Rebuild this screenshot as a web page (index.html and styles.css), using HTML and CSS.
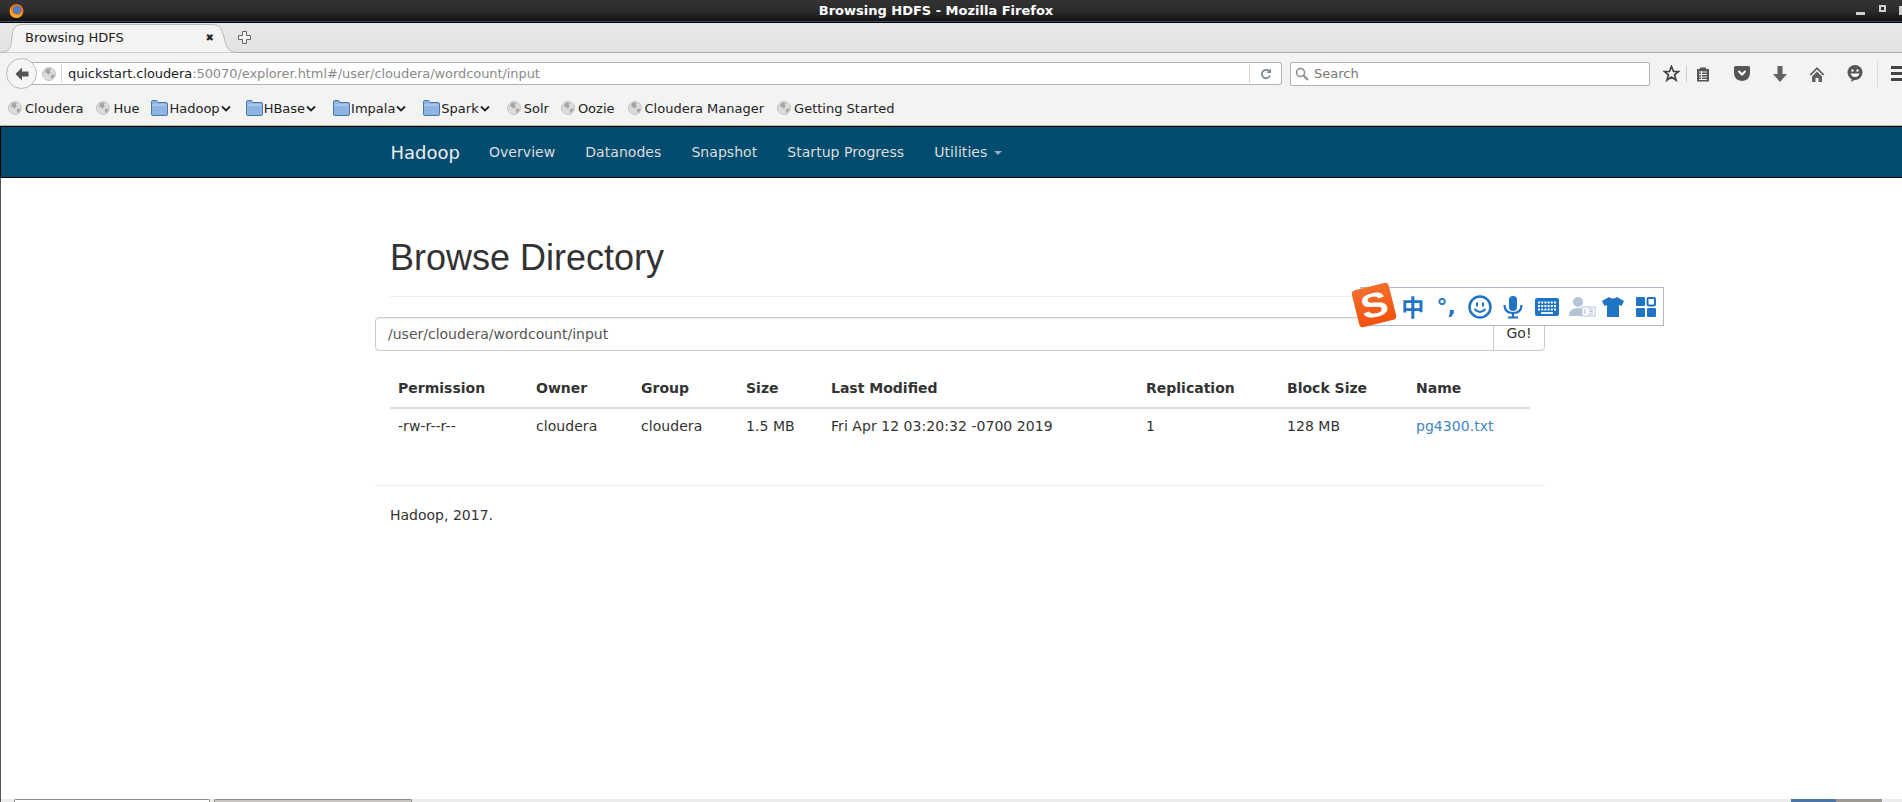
FILE: index.html
```html
<!DOCTYPE html>
<html lang="en">
<head>
    <meta charset="UTF-8">
    <title>Browsing HDFS - Mozilla Firefox</title>
    <link rel="stylesheet" href="styles.css">
</head>
<body>
<svg class="defs" width="0" height="0">
    <defs>
        <symbol id="globe" viewBox="0 0 14 14">
            <circle cx="7" cy="7" r="6.5" fill="#dcdcdc" stroke="#c4c4c4"/>
            <path d="M4 2.2c2-1 4-.6 5 .3L7.6 4 8.8 5.6 6.6 7.8 4.8 6 3 5.6zM9 8l2.800-.6.800 1.600L10 12l-1.200-1.500z" fill="#a6a6a6"/>
        </symbol>
        <symbol id="folder" viewBox="0 0 17 16">
            <path d="M.5 14V2q0-1.500 1.500-1.500h3.500L7 2.500h8q1.500 0 1.500 1.500v10q0 1.500-1.500 1.500H2Q.5 15.500.5 14z" fill="#8db4e2" stroke="#4a76a8"/>
            <path d="M1.500 5h14" stroke="#c4d9f2"/>
        </symbol>
        <symbol id="chev" viewBox="0 0 10 7">
            <path d="M1 1.500l4 4 4-4" fill="none" stroke="#222" stroke-width="1.800"/>
        </symbol>
    </defs>
</svg>

<div class="window">
    <div class="titlebar">
        <svg class="fx-logo" width="15" height="16" viewBox="0 0 15 16">
            <circle cx="7.500" cy="8" r="7" fill="#ee6f1c"/>
            <circle cx="8" cy="7" r="4" fill="#4a7fc4"/>
            <path d="M2 5q1 7 6 7 4 0 5-4 1 6-5.500 7Q1 15 .8 8 1 5 3 2.500z" fill="#f7a823"/>
        </svg>
        <div class="win-title">Browsing HDFS - Mozilla Firefox</div>
        <div class="win-btns">
            <span class="win-min"></span>
            <span class="win-max"></span>
            <span class="win-close"></span>
        </div>
    </div>

    <div class="tabstrip">
        <div class="tab">
            <svg class="tab-shape" width="238" height="30" viewBox="0 0 238 30">
                <path d="M0 29.500C10 29.500 11 24 12 14 13 6 14 1.500 22 1.500H212C220 1.500 222 6 224 14 226 24 228 29.500 238 29.500" fill="#f3f3f2" stroke="#b9b9b7"/>
            </svg>
            <span class="tab-label">Browsing HDFS</span>
            <span class="tab-x">&#10006;</span>
        </div>
        <svg class="newtab" width="13" height="13" viewBox="0 0 13 13">
            <path d="M4.500.5h4v4h4v4h-4v4h-4v-4h-4v-4h4z" fill="#f4f4f4" stroke="#666"/>
        </svg>
    </div>

    <div class="toolbar">
        <div class="nav-row">
            <div class="back-btn">
                <svg width="16" height="16" viewBox="0 0 16 16">
                    <path d="M8 1.500L1.500 8 8 14.500v-4h6.500v-5H8z" fill="#555"/>
                </svg>
            </div>
            <div class="urlbar">
                <svg class="url-globe" width="14" height="14"><use href="#globe"/></svg>
                <span class="url-text">quickstart.cloudera<span class="url-rest">:50070/explorer.html#/user/cloudera/wordcount/input</span></span>
                <span class="reload">
                    <svg width="12" height="12" viewBox="0 0 12 12">
                        <path d="M10 7.500A4.200 4.200 0 1 1 9 3" fill="none" stroke="#7a8a99" stroke-width="1.800"/>
                        <path d="M11 .5v4.500H6.500z" fill="#7a8a99"/>
                    </svg>
                </span>
            </div>
            <div class="searchbar">
                <svg width="14" height="14" viewBox="0 0 14 14">
                    <circle cx="5.500" cy="5.500" r="4" fill="none" stroke="#888" stroke-width="1.500"/>
                    <path d="M8.500 8.500l4.500 4.500" stroke="#888" stroke-width="2"/>
                </svg>
                <span>Search</span>
            </div>
            <div class="tool-icons">
                <svg class="ti-star" width="17" height="17" viewBox="0 0 17 17">
                    <path d="M8.500 1.500l2 5h5.200l-4.200 3.300 1.600 5.400-4.600-3.100-4.600 3.100 1.600-5.400L1.300 6.500h5.200z" fill="none" stroke="#444" stroke-width="1.700"/>
                </svg>
                <span class="ti-div"></span>
                <svg class="ti-clip" width="14" height="16" viewBox="0 0 14 16">
                    <path d="M1 3h3V1.500h6V3h3v12.500H1z" fill="#555"/>
                    <path d="M3 6h8M3 8.500h8M3 11h8M3 13.500h8M5.500 5v9" stroke="#f3f3f2"/>
                </svg>
                <svg class="ti-pocket" width="16" height="15" viewBox="0 0 16 15">
                    <path d="M0 1.500Q0 0 1.500 0h13Q16 0 16 1.500V7q0 7-8 8-8-1-8-8z" fill="#555"/>
                    <path d="M4.500 5l3.500 3.500L11.500 5" fill="none" stroke="#fff" stroke-width="2"/>
                </svg>
                <svg class="ti-down" width="14" height="16" viewBox="0 0 14 16">
                    <path d="M4.500 0h5v8H14l-7 8-7-8h4.500z" fill="#616161"/>
                </svg>
                <svg class="ti-home" width="16" height="16" viewBox="0 0 16 16">
                    <path d="M8 1L.5 8.500 2 9.500l6-6 6 6 1.500-1z" fill="#616161"/>
                    <path d="M3 10.500l5-5 5 5V16H9.500v-4h-3v4H3z" fill="#616161"/>
                </svg>
                <svg class="ti-smile" width="16" height="17" viewBox="0 0 16 17">
                    <circle cx="8" cy="7.500" r="7.500" fill="#555"/>
                    <path d="M5 13l-1 4 5-3z" fill="#555"/>
                    <circle cx="5.500" cy="5.500" r="1.200" fill="#fff"/>
                    <circle cx="10.500" cy="5.500" r="1.200" fill="#fff"/>
                    <path d="M3.500 8.500h9q-1 3.500-4.500 3.500T3.500 8.500z" fill="#fff"/>
                </svg>
                <span class="ti-sep"></span>
                <span class="ti-menu"><i></i><i></i><i></i></span>
            </div>
        </div>
        <div class="bookmarks">
            <span class="bm"><svg width="14" height="14"><use href="#globe"/></svg>Cloudera</span>
            <span class="bm"><svg width="14" height="14"><use href="#globe"/></svg>Hue</span>
            <span class="bm bm-folder bm-first"><svg width="17" height="16"><use href="#folder"/></svg>Hadoop<svg width="10" height="7"><use href="#chev"/></svg></span>
            <span class="bm bm-folder"><svg width="17" height="16"><use href="#folder"/></svg>HBase<svg width="10" height="7"><use href="#chev"/></svg></span>
            <span class="bm bm-folder"><svg width="17" height="16"><use href="#folder"/></svg>Impala<svg width="10" height="7"><use href="#chev"/></svg></span>
            <span class="bm bm-folder"><svg width="17" height="16"><use href="#folder"/></svg>Spark<svg width="10" height="7"><use href="#chev"/></svg></span>
            <span class="bm bm-solr"><svg width="14" height="14"><use href="#globe"/></svg>Solr</span>
            <span class="bm"><svg width="14" height="14"><use href="#globe"/></svg>Oozie</span>
            <span class="bm"><svg width="14" height="14"><use href="#globe"/></svg>Cloudera Manager</span>
            <span class="bm"><svg width="14" height="14"><use href="#globe"/></svg>Getting Started</span>
        </div>
    </div>

    <div class="page">
        <nav class="navbar">
            <div class="nav-inner">
                <a class="brand" href="#">Hadoop</a>
                <a class="nav-link" href="#">Overview</a>
                <a class="nav-link" href="#">Datanodes</a>
                <a class="nav-link" href="#">Snapshot</a>
                <a class="nav-link" href="#">Startup Progress</a>
                <a class="nav-link" href="#">Utilities <b class="caret"></b></a>
            </div>
        </nav>

        <div class="container">
            <div class="page-header">
                <h1>Browse Directory</h1>
            </div>

            <div class="input-group">
                <input class="dir-input" type="text" value="/user/cloudera/wordcount/input">
                <button class="go-btn" type="button">Go!</button>
            </div>

            <table class="file-table">
                <colgroup>
                    <col class="col-perm">
                    <col class="col-owner">
                    <col class="col-group">
                    <col class="col-size">
                    <col class="col-date">
                    <col class="col-repl">
                    <col class="col-block">
                    <col class="col-name">
                </colgroup>
                <thead>
                    <tr>
                        <th>Permission</th>
                        <th>Owner</th>
                        <th>Group</th>
                        <th>Size</th>
                        <th>Last Modified</th>
                        <th>Replication</th>
                        <th>Block Size</th>
                        <th>Name</th>
                    </tr>
                </thead>
                <tbody>
                    <tr>
                        <td>-rw-r--r--</td>
                        <td>cloudera</td>
                        <td>cloudera</td>
                        <td>1.5 MB</td>
                        <td>Fri Apr 12 03:20:32 -0700 2019</td>
                        <td>1</td>
                        <td>128 MB</td>
                        <td><a href="#">pg4300.txt</a></td>
                    </tr>
                </tbody>
            </table>

            <hr class="foot-rule">
            <p class="foot-text">Hadoop, 2017.</p>
        </div>
    </div>

    <div class="taskbar">
        <span class="task task-a"></span>
        <span class="task task-b"></span>
        <span class="task-space"></span>
        <span class="pager pager-on"></span>
        <span class="pager"></span>
    </div>

    <!-- input method toolbar floats over the page -->
    <div class="ime">
        <div class="ime-logo"><span>S</span></div>
        <span class="ime-cell ime-zh">中</span>
        <span class="ime-cell ime-punct">°,</span>
        <span class="ime-cell">
            <svg width="24" height="24" viewBox="0 0 24 24">
                <circle cx="12" cy="12" r="10.500" fill="none" stroke="#1f74c4" stroke-width="2.500"/>
                <path d="M9 7.500v4M15 7.500v4" stroke="#1f74c4" stroke-width="2"/>
                <path d="M6.500 14q5.500 6 11 0" fill="none" stroke="#1f74c4" stroke-width="2"/>
            </svg>
        </span>
        <span class="ime-cell">
            <svg width="20" height="24" viewBox="0 0 20 24">
                <rect x="6" y="1" width="8" height="15" rx="4" fill="#1f74c4"/>
                <path d="M1.500 10q0 8 8.500 8t8.500-8" fill="none" stroke="#1f74c4" stroke-width="2.200"/>
                <path d="M10 18v4M5 22.500h10" stroke="#1f74c4" stroke-width="2.200"/>
            </svg>
        </span>
        <span class="ime-cell">
            <svg width="24" height="18" viewBox="0 0 24 18">
                <rect width="24" height="18" rx="2" fill="#1f74c4"/>
                <path d="M3 4.500h18M3 8h18M3 11.500h18" stroke="#fff" stroke-width="1.800" stroke-dasharray="2 1.200"/>
                <path d="M6 15h12" stroke="#fff" stroke-width="1.800"/>
            </svg>
        </span>
        <span class="ime-cell ime-user">
            <svg width="28" height="20" viewBox="0 0 28 20">
                <circle cx="10" cy="5" r="5" fill="#b5c3d6"/>
                <path d="M1 19q0-8 9-8 4 0 5 1v7z" fill="#b5c3d6"/>
                <rect x="14" y="10" width="13" height="9" fill="#fff" stroke="#b5c3d6"/>
                <path d="M17 12v5M20 12h4v5h-4M21 14.500h3" fill="none" stroke="#b5c3d6" stroke-width="1.200"/>
            </svg>
        </span>
        <span class="ime-cell ime-shirt">
            <svg width="22" height="20" viewBox="0 0 22 20">
                <path d="M7 0q4 3 8 0l7 4-2.500 5L17 8v12H5V8L2.500 9 0 4z" fill="#1f74c4"/>
            </svg>
        </span>
        <span class="ime-cell ime-grid">
            <svg width="20" height="20" viewBox="0 0 20 20">
                <rect width="9" height="9" rx="1" fill="#1f74c4"/>
                <rect x="11.500" y="1" width="7.500" height="7.500" rx="1" fill="#fff" stroke="#1f74c4" stroke-width="2"/>
                <rect y="11" width="9" height="9" rx="1" fill="#1f74c4"/>
                <rect x="11" y="11" width="9" height="9" rx="1" fill="#1f74c4"/>
            </svg>
        </span>
    </div>
</div>
</body>
</html>
```

FILE: styles.css
```css
* {
    box-sizing: border-box;
}
html, body {
    margin: 0;
    padding: 0;
    height: 100%;
    overflow: hidden;
    background-color: #ffffff;
}
body {
    font-family: "DejaVu Sans", sans-serif;
    font-size: 14px;
    color: #333333;
}
.defs {
    position: absolute;
}
/* the real desktop is 1920 wide, the shot cuts off the right edge */
.window {
    position: relative;
    width: 1920px;
    height: 802px;
    display: flex;
    flex-direction: column;
    overflow: hidden;
}

/* title bar */
.titlebar {
    height: 23px;
    flex: none;
    display: flex;
    align-items: center;
    padding: 0 10px 1px 9px;
    background: linear-gradient(#333333, #2b2b2b 50%, #111111);
    border-bottom: 1px solid #000000;
    box-shadow: inset 0 -1px 0 #3a5068;
}
.win-title {
    flex: 1;
    text-align: center;
    padding-right: 8px;
    color: #ffffff;
    font-size: 13px;
    font-weight: bold;
}
.win-btns {
    display: flex;
    align-items: center;
    gap: 13px;
    margin-right: 2px;
}
.win-min {
    width: 9px;
    height: 3px;
    margin-top: 5px;
    background-color: #cfcfcf;
}
.win-max {
    width: 7px;
    height: 7px;
    margin-top: -4px;
    margin-left: 1px;
    border: 2px solid #cfcfcf;
}
.win-close {
    width: 9px;
    height: 9px;
    background-color: #cfcfcf;
}

/* tabs */
.tabstrip {
    height: 30px;
    flex: none;
    display: flex;
    align-items: center;
    background: linear-gradient(#e9e9e7, #e3e3e1);
    border-bottom: 1px solid #adadab;
}
.tab {
    position: relative;
    width: 236px;
    height: 30px;
    display: flex;
    align-items: center;
    justify-content: space-between;
    padding: 0 22px 0 25px;
    font-size: 13px;
    color: #222222;
}
.tab-shape {
    position: absolute;
    left: 0;
    top: 0;
}
.tab-label, .tab-x {
    position: relative;
}
.tab-x {
    font-size: 10px;
    color: #222222;
}
.newtab {
    margin-left: 2px;
}

/* nav row + bookmarks */
.toolbar {
    height: 73px;
    flex: none;
    background-color: #f3f3f2;
    border-bottom: 1px solid #b4b4b2;
}
.nav-row {
    height: 41px;
    display: flex;
    align-items: center;
    padding-left: 6px;
}
.back-btn {
    width: 31px;
    height: 31px;
    flex: none;
    position: relative;
    z-index: 1;
    display: flex;
    align-items: center;
    justify-content: center;
    background-color: #f5f5f4;
    border: 1px solid #b9b9b7;
    border-radius: 50%;
}
.urlbar {
    width: 1251px;
    height: 23px;
    margin-left: -6px;
    display: flex;
    align-items: center;
    padding-left: 11px;
    background-color: #ffffff;
    border: 1px solid #b3b3b1;
    border-left: none;
    border-radius: 0 3px 3px 0;
    font-size: 13px;
    color: #222222;
}
.url-globe {
    margin-right: 5px;
}
.url-text {
    flex: 1;
    padding-left: 6px;
    border-left: 1px solid #d6d6d6;
    line-height: 19px;
    letter-spacing: -0.08px;
}
.url-rest {
    color: #8a8a8a;
}
.reload {
    width: 32px;
    height: 19px;
    display: flex;
    align-items: center;
    justify-content: center;
    border-left: 1px solid #d6d6d6;
}
.searchbar {
    width: 360px;
    height: 24px;
    margin-left: 8px;
    display: flex;
    align-items: center;
    gap: 5px;
    padding-left: 4px;
    background-color: #ffffff;
    border: 1px solid #b3b3b1;
    border-radius: 2px;
    font-size: 13px;
    color: #777777;
}
.tool-icons {
    display: flex;
    align-items: center;
    margin-left: 13px;
}
.ti-div {
    width: 1px;
    height: 18px;
    margin: 0 9px 0 6px;
    background-color: #cfcfcd;
}
.ti-pocket {
    margin-left: 24px;
}
.ti-down {
    margin-left: 23px;
}
.ti-home {
    margin-left: 22px;
}
.ti-smile {
    margin-left: 22px;
}
.ti-sep {
    width: 1px;
    height: 26px;
    margin-left: 14px;
    background-color: #dcdcda;
}
.ti-menu {
    width: 16px;
    margin-left: 13px;
    display: flex;
    flex-direction: column;
    gap: 3px;
}
.ti-menu i {
    height: 3px;
    background-color: #444444;
}
.bookmarks {
    height: 28px;
    display: flex;
    align-items: center;
    gap: 13px;
    padding-left: 8px;
    font-size: 13px;
    color: #222222;
}
.bm {
    display: flex;
    align-items: center;
    gap: 3px;
}
.bm-folder {
    gap: 1px;
    padding-right: 4px;
}
.bm-first {
    margin-left: -1px;
    padding-right: 2px;
}
.bm-solr {
    margin-right: -1px;
}

/* page */
.page {
    flex: 1;
    box-shadow: inset 1px 0 0 #555555;
    background-color: #ffffff;
}
.navbar {
    height: 52px;
    background-color: #024c6f;
    border-top: 1px solid #000000;
    border-bottom: 1px solid #000000;
    border-left: 1px solid #000000;
}
.nav-inner {
    width: 1170px;
    height: 50px;
    margin: 0 auto;
    display: flex;
    align-items: center;
    padding-left: 15px;
}
.brand {
    margin-right: 14px;
    font-size: 18px;
    color: #eeeeee;
    text-decoration: none;
}
.nav-link {
    padding: 0 15px;
    color: #dddddd;
    text-decoration: none;
    letter-spacing: 0.05px;
}
.caret {
    display: inline-block;
    margin-left: 2px;
    vertical-align: middle;
    border-top: 4px solid #9aaab5;
    border-left: 4px solid transparent;
    border-right: 4px solid transparent;
}
.container {
    width: 1170px;
    margin: 0 auto;
}
.page-header {
    margin: 60px 15px 20px;
    padding-bottom: 9px;
    border-bottom: 1px solid #eeeeee;
}
h1 {
    margin: 0 0 9px;
    font-family: "Liberation Sans", Arial, sans-serif;
    font-size: 36px;
    font-weight: 500;
    line-height: 1.1;
    color: #333333;
}
.input-group {
    display: flex;
    height: 34px;
}
.dir-input {
    flex: 1;
    padding: 6px 12px;
    font-family: inherit;
    font-size: 14px;
    color: #555555;
    border: 1px solid #cccccc;
    border-radius: 4px 0 0 4px;
    box-shadow: inset 0 1px 1px rgba(0, 0, 0, 0.075);
}
.go-btn {
    width: 52px;
    margin-left: -1px;
    padding-bottom: 2px;
    font-family: inherit;
    font-size: 14px;
    color: #333333;
    background-color: #ffffff;
    border: 1px solid #cccccc;
    border-radius: 0 4px 4px 0;
}
.file-table {
    width: 1140px;
    margin: 20px 15px;
    border-collapse: collapse;
    table-layout: fixed;
}
.col-perm { width: 138px; }
.col-owner { width: 105px; }
.col-group { width: 105px; }
.col-size { width: 85px; }
.col-date { width: 315px; }
.col-repl { width: 141px; }
.col-block { width: 129px; }
.col-name { width: 122px; }
.file-table th, .file-table td {
    padding: 7px 8px 9px;
    text-align: left;
    line-height: 20px;
}
.file-table th {
    border-bottom: 2px solid #dddddd;
}
.file-table td {
    letter-spacing: 0.05px;
}
.file-table a {
    color: #4286c8;
    text-decoration: none;
}
.foot-rule {
    margin: 40px 0 19px;
    border: none;
    border-top: 1px solid #eeeeee;
}
.foot-text {
    margin: 0 15px;
    line-height: 20px;
}

/* strip at the bottom of the screen */
.taskbar {
    height: 3px;
    flex: none;
    display: flex;
    padding-left: 14px;
    background-color: #ececec;
    box-shadow: inset 1px 0 0 #555555;
}
.task {
    height: 3px;
    border: 1px solid #8e8a85;
    border-bottom: none;
    border-radius: 2px 2px 0 0;
}
.task-a {
    width: 196px;
    background-color: #ffffff;
}
.task-b {
    width: 198px;
    margin-left: 4px;
    background-color: #c9c5c0;
}
.task-space {
    width: 1379px;
}
.pager {
    width: 46px;
    height: 3px;
    background-color: #9d9892;
}
.pager-on {
    width: 45px;
    background-color: #4a76a8;
}

/* sogou input method bar */
.ime {
    position: absolute;
    left: 1360px;
    top: 287px;
    width: 304px;
    height: 39px;
    display: flex;
    align-items: center;
    padding-left: 35px;
    background-color: #ffffff;
    border: 1px solid #b2b8c4;
}
.ime-logo {
    position: absolute;
    left: -6px;
    top: -2px;
    width: 38px;
    height: 38px;
    display: flex;
    align-items: center;
    justify-content: center;
    background: linear-gradient(#f0702c, #f4500e);
    border-radius: 4px;
    transform: rotate(-14deg);
}
.ime-logo span {
    font-family: "Liberation Sans", sans-serif;
    font-size: 34px;
    font-weight: bold;
    line-height: 1;
    color: #ffffff;
    transform: scaleX(1.2);
}
.ime-cell {
    width: 33.500px;
    flex: none;
    display: flex;
    align-items: center;
    justify-content: center;
}
.ime-user {
    padding-left: 4px;
}
.ime-shirt {
    padding-right: 2px;
}
.ime-grid {
    padding-right: 2px;
}
.ime-zh {
    font-family: "Noto Sans CJK SC", sans-serif;
    font-size: 23px;
    font-weight: bold;
    line-height: 1;
    color: #1f74c4;
}
.ime-punct {
    font-family: "DejaVu Sans", sans-serif;
    font-size: 22px;
    font-weight: bold;
    line-height: 1;
    color: #1f74c4;
}
```
